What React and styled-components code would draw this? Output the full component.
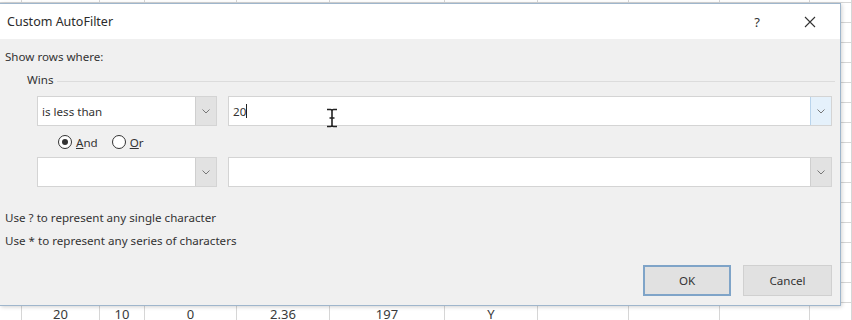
import React from "react";
import styled, { createGlobalStyle } from "styled-components";

const Global = createGlobalStyle`
  html, body { margin: 0; padding: 0; background: #fff; }
  body { font-family: "Noto Sans", "Liberation Sans", sans-serif; }
`;

const Screen = styled.div`
  position: relative;
  width: 852px;
  height: 320px;
  overflow: hidden;
  background: #fff;
`;

const Sheet = styled.div`
  height: 323px;
  display: flex;
  flex-direction: column;
  justify-content: flex-end;
`;

const SheetRow = styled.div`
  display: grid;
  grid-template-columns: 22px 78px 45px 92px 93px 115px 93px 91px 91px 90px 42px;
  height: 20px;
  flex-shrink: 0;
`;

const Cell = styled.div`
  border-right: 1px solid #d6d6d6;
  border-bottom: 1px solid #d6d6d6;
  font-family: "Noto Sans", sans-serif;
  font-size: 13px;
  color: #3a3a3a;
  display: flex;
  align-items: center;
  justify-content: center;
  padding-top: 2px;
`;

const Dialog = styled.div`
  position: absolute;
  left: 0;
  top: 3px;
  width: 840px;
  height: 301px;
  background: #f0f0f0;
  border: 1px solid #9fb6cc;
  border-left: none;
  box-shadow: 1px 1px 4px rgba(0, 0, 0, 0.18);
  display: flex;
  flex-direction: column;
`;

const TitleBar = styled.div`
  height: 35px;
  background: #fff;
  display: flex;
  align-items: center;
  padding-left: 7px;
  flex-shrink: 0;
`;

const Title = styled.div`
  flex: 1;
  font-size: 12.5px;
  color: #2b2b2b;
`;

const TitleButton = styled.div`
  width: ${(p) => p.$w}px;
  height: 35px;
  display: flex;
  align-items: center;
  justify-content: center;
  color: #333;
  font-size: 13px;
`;

const Body = styled.div`
  flex: 1;
  padding: 11px 8px 0 5px;
  display: flex;
  flex-direction: column;
`;

const Label = styled.div`
  font-size: 11.6px;
  line-height: 14px;
  color: #333;
`;

const Legend = styled.div`
  display: flex;
  align-items: center;
  gap: 3px;
  margin: 9px 0 0 22px;
  font-size: 11.6px;
  line-height: 14px;
  color: #333;
`;

const LegendLine = styled.div`
  flex: 1;
  height: 1px;
  background: #dcdcdc;
  margin-top: 3px;
  margin-right: -3px;
`;

const FilterRow = styled.div`
  display: flex;
  gap: 11px;
  margin-top: ${(p) => p.$top}px;
  padding-left: 32px;
`;

const Box = styled.div`
  position: relative;
  display: flex;
  height: 30px;
  width: ${(p) => (p.$grow ? "auto" : "180px")};
  flex: ${(p) => (p.$grow ? 1 : "none")};
  background: #fff;
  border: 1px solid #d4d4d4;
  box-sizing: border-box;
`;

const Value = styled.div`
  flex: 1;
  display: flex;
  align-items: center;
  padding-left: 4px;
  font-size: 11.6px;
  color: #333;
`;

const Caret = styled.span`
  display: inline-block;
  width: 1px;
  height: 14px;
  background: #222;
`;

const DropButton = styled.div`
  width: 20px;
  display: flex;
  align-items: center;
  justify-content: center;
  background: ${(p) => (p.$hover ? "#e5f1fb" : "#e2e2e2")};
  border-left: 1px solid ${(p) => (p.$hover ? "#b9d4ec" : "#cfcfcf")};
`;

const Cursor = styled.svg`
  position: absolute;
  left: 96px;
  top: 11px;
`;

const RadioRow = styled.div`
  display: flex;
  align-items: center;
  gap: 14px;
  margin: 8px 0 0 53px;
  height: 16px;
`;

const RadioItem = styled.label`
  display: flex;
  align-items: center;
  gap: 4px;
  font-size: 11.6px;
  color: #333;
`;

const RadioCircle = styled.span`
  width: 12px;
  height: 12px;
  border-radius: 50%;
  border: 1px solid #333;
  background: #fff;
  display: flex;
  align-items: center;
  justify-content: center;
  &::after {
    content: "";
    width: 6px;
    height: 6px;
    border-radius: 50%;
    background: ${(p) => (p.$checked ? "#333" : "transparent")};
  }
`;

const Hint = styled(Label)`
  margin-top: ${(p) => p.$top}px;
`;

const Buttons = styled.div`
  display: flex;
  justify-content: flex-end;
  gap: 12px;
  margin-top: 17px;
`;

const Button = styled.div`
  width: ${(p) => p.$w}px;
  height: 31px;
  box-sizing: border-box;
  display: flex;
  align-items: center;
  justify-content: center;
  font-size: 11.6px;
  color: #333;
  background: #e1e1e1;
  border: ${(p) => (p.$default ? "2px solid #7fa4c8" : "1px solid #d0d0d0")};
`;

function Chevron() {
  return (
    <svg width="8" height="5" viewBox="0 0 8 5">
      <path d="M0.5 0.5 L4 4 L7.5 0.5" fill="none" stroke="#777" strokeWidth="1" />
    </svg>
  );
}

const rows = Array.from({ length: 17 });
const last = ["", "20", "10", "0", "2.36", "197", "Y", "", "", "", ""];

export default function App() {
  return (
    <Screen>
      <Global />
      <Sheet>
        {rows.map((_, r) => (
          <SheetRow key={r}>
            {last.map((v, c) => (
              <Cell key={c}>{r === rows.length - 1 ? v : ""}</Cell>
            ))}
          </SheetRow>
        ))}
      </Sheet>

      <Dialog>
        <TitleBar>
          <Title>Custom AutoFilter</Title>
          <TitleButton $w={46}>?</TitleButton>
          <TitleButton $w={60}>
            <svg width="12" height="12" viewBox="0 0 12 12">
              <path d="M1 1 L11 11 M11 1 L1 11" stroke="#333" strokeWidth="1.1" />
            </svg>
          </TitleButton>
        </TitleBar>
        <Body>
          <Label>Show rows where:</Label>
          <Legend>
            Wins
            <LegendLine />
          </Legend>
          <FilterRow $top={9}>
            <Box>
              <Value>is less than</Value>
              <DropButton>
                <Chevron />
              </DropButton>
            </Box>
            <Box $grow>
              <Value>
                20
                <Caret />
              </Value>
              <DropButton $hover>
                <Chevron />
              </DropButton>
              <Cursor width="14" height="20" viewBox="0 0 14 20">
                <path
                  d="M2 1.5 H5.5 Q7 1.5 7 3 Q7 1.5 8.5 1.5 H12 M7 3 V17 M2 18.5 H5.5 Q7 18.5 7 17 Q7 18.5 8.5 18.5 H12 M4.5 10 H9.5"
                  fill="none"
                  stroke="#222"
                  strokeWidth="1.6"
                />
              </Cursor>
            </Box>
          </FilterRow>
          <RadioRow>
            <RadioItem>
              <RadioCircle $checked />
              <span>
                <u>A</u>nd
              </span>
            </RadioItem>
            <RadioItem>
              <RadioCircle />
              <span>
                <u>O</u>r
              </span>
            </RadioItem>
          </RadioRow>
          <FilterRow $top={7}>
            <Box>
              <Value />
              <DropButton>
                <Chevron />
              </DropButton>
            </Box>
            <Box $grow>
              <Value />
              <DropButton>
                <Chevron />
              </DropButton>
            </Box>
          </FilterRow>
          <Hint $top={24}>Use ? to represent any single character</Hint>
          <Hint $top={9}>Use * to represent any series of characters</Hint>
          <Buttons>
            <Button $w={88} $default>
              OK
            </Button>
            <Button $w={89}>Cancel</Button>
          </Buttons>
        </Body>
      </Dialog>
    </Screen>
  );
}
